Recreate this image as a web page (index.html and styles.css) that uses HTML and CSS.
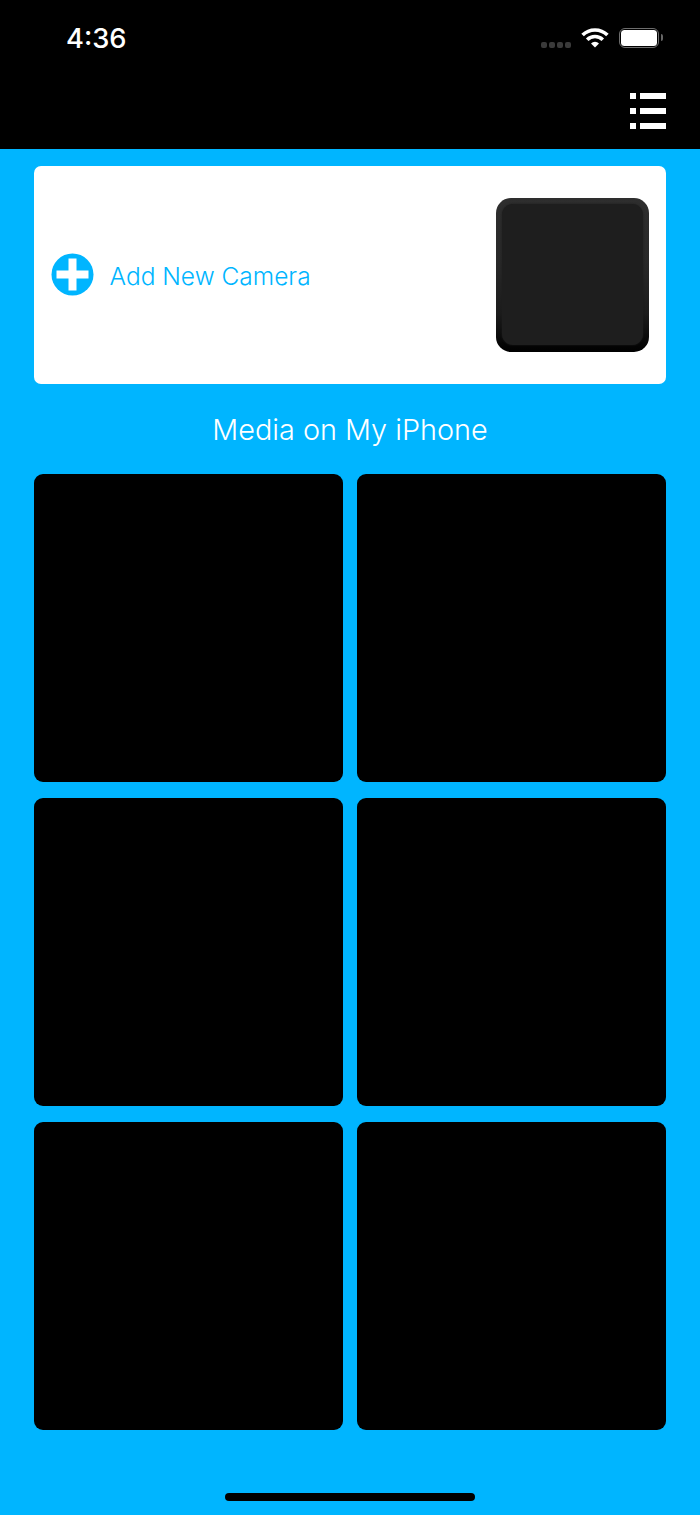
FILE: index.html
```html
<!DOCTYPE html>
<html lang="en">
<head>
  <meta charset="UTF-8" />
  <meta name="viewport" content="width=device-width, initial-scale=1.0"/>
  <title>Media on My iPhone</title>
  <link rel="stylesheet" href="styles.css">
</head>
<body>
  <header class="top">
    <div class="status">
      <span class="time">4:36</span>
      <div class="status-icons">
        <div class="signal"><i></i><i></i><i></i><i></i></div>
        <svg class="wifi" width="28" height="21" viewBox="0 0 28 21">
          <path d="M1.600 8.100a17.500 17.500 0 0 1 24.800 0M6.200 12.700a11 11 0 0 1 15.600 0" fill="none" stroke="#fff" stroke-width="3.600"/>
          <path d="M14 20.500L10 16.500a5.600 5.600 0 0 1 8 0z" fill="#fff"/>
        </svg>
        <div class="battery"><div class="battery-fill"></div></div>
        <div class="battery-cap"></div>
      </div>
    </div>
    <div class="nav">
      <div class="list-icon">
        <div class="list-row"><i></i><b></b></div>
        <div class="list-row"><i></i><b></b></div>
        <div class="list-row"><i></i><b></b></div>
      </div>
    </div>
  </header>

  <main class="content">
    <section class="add-card">
      <div class="add-camera">
        <svg class="plus" width="43" height="43" viewBox="0 0 43 43">
          <circle cx="21.500" cy="21.500" r="21" fill="#00b5ff"/>
          <path d="M17.500 5.500h8V17.500h12v8h-12v12h-8v-12H5.500v-8h12z" fill="#fff"/>
        </svg>
        <span class="add-label">Add New Camera</span>
      </div>
      <div class="preview"><div class="preview-inner"></div></div>
    </section>

    <h2 class="section-title">Media on My iPhone</h2>

    <div class="media-grid">
      <div class="tile"></div>
      <div class="tile"></div>
      <div class="tile"></div>
      <div class="tile"></div>
      <div class="tile"></div>
      <div class="tile"></div>
    </div>
  </main>

  <div class="home-bar"></div>
</body>
</html>
```

FILE: styles.css
```css
html, body {
  margin: 0;
  padding: 0;
}

body {
  width: 700px;
  height: 1515px;
  overflow: hidden;
  display: flex;
  flex-direction: column;
  background-color: #00b5ff;
  font-family: "Inter", "Liberation Sans", sans-serif;
}

.top {
  height: 149px;
  background-color: #000;
  color: #fff;
}

.status {
  height: 87px;
  display: flex;
  justify-content: space-between;
  align-items: flex-start;
  padding: 0 37px 0 66px;
}

.time {
  margin-top: 23px;
  font-size: 27.300px;
  line-height: 32px;
  font-weight: 500;
}

.status-icons {
  display: flex;
  align-items: center;
  margin-top: 27px;
}

.signal {
  display: flex;
  gap: 2px;
  margin-top: 14px;
  margin-right: 10px;
}

.signal i {
  width: 6px;
  height: 6px;
  border-radius: 2px;
  background: #3a3a3a;
}

.wifi {
  margin-right: 10px;
}

.battery {
  width: 40px;
  height: 20px;
  box-sizing: border-box;
  border: 1.500px solid #6e6e6e;
  border-radius: 6px;
  padding: 1px;
}

.battery-fill {
  height: 100%;
  background: #fff;
  border-radius: 3.500px;
}

.battery-cap {
  width: 2.500px;
  height: 7px;
  margin-left: 1.500px;
  background: #666;
  border-radius: 0 2px 2px 0;
}

.nav {
  display: flex;
  justify-content: flex-end;
  padding: 6px 34px 0 0;
}

.list-icon {
  display: flex;
  flex-direction: column;
  gap: 9px;
}

.list-row {
  display: flex;
  gap: 4px;
}

.list-row i {
  width: 6px;
  height: 6px;
  background: #fff;
}

.list-row b {
  width: 26px;
  height: 6px;
  background: #fff;
}

.content {
  padding: 17px 34px 0;
}

.add-card {
  height: 218px;
  display: flex;
  align-items: center;
  justify-content: space-between;
  padding: 0 17px 0 16.500px;
  background: #fff;
  border-radius: 7px;
}

.add-camera {
  display: flex;
  align-items: center;
  gap: 16px;
}

.plus {
  display: block;
  margin-top: -1px;
}

.add-label {
  margin-top: 1px;
  color: #00b5ff;
  font-size: 24.500px;
  line-height: 28px;
  font-weight: 300;
}

.preview {
  width: 153px;
  height: 154px;
  box-sizing: border-box;
  padding: 6px 6px 7px;
  border-radius: 15px;
  background: linear-gradient(#2e2e2e, #292929 40%, #1c1c1c 75%, #000 100%);
}

.preview-inner {
  height: 100%;
  background: #1e1e1e;
  border-radius: 11px;
  box-shadow: 0 0 2px #1e1e1e;
}

.section-title {
  margin: 27px 0 26px;
  text-align: center;
  color: #fff;
  font-size: 28.800px;
  line-height: 37px;
  font-weight: 300;
}

.media-grid {
  display: grid;
  grid-template-columns: 309px 309px;
  grid-auto-rows: 307.500px;
  gap: 16.500px 14px;
}

.tile {
  background: #000;
  border-radius: 9px;
}

.home-bar {
  width: 250px;
  height: 8px;
  margin: auto auto 14px;
  background: #000;
  border-radius: 4px;
}
```
